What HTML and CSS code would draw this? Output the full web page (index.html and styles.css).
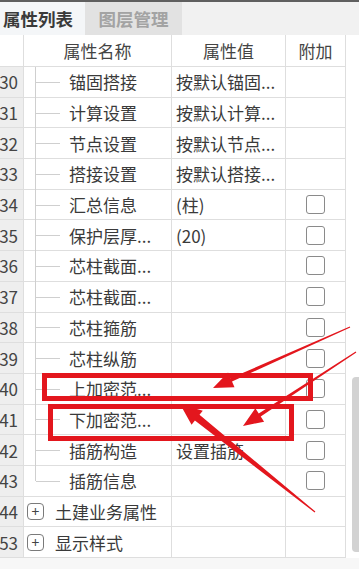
FILE: index.html
```html
<!DOCTYPE html>
<html lang="zh">
<head>
<meta charset="utf-8">
<title>属性列表</title>
<link rel="stylesheet" href="styles.css">
</head>
<body>
<div class="panel">
  <div class="tabs">
    <div class="tab tab-active">属性列表</div>
    <div class="tab tab-idle">图层管理</div>
    <div class="tab-fill"></div>
  </div>
  <div class="head">
    <div class="hc"></div>
    <div class="hc">属性名称</div>
    <div class="hc">属性值</div>
    <div class="hc">附加</div>
    <div class="hc hc-last"></div>
  </div>
  <div class="body">
    <div class="rows">
      <div class="row"><div class="c num">30</div><div class="c name tree">锚固搭接</div><div class="c val">按默认锚固...</div><div class="c add"></div></div>
      <div class="row"><div class="c num">31</div><div class="c name tree">计算设置</div><div class="c val">按默认计算...</div><div class="c add"></div></div>
      <div class="row"><div class="c num">32</div><div class="c name tree">节点设置</div><div class="c val">按默认节点...</div><div class="c add"></div></div>
      <div class="row"><div class="c num">33</div><div class="c name tree">搭接设置</div><div class="c val">按默认搭接...</div><div class="c add"></div></div>
      <div class="row"><div class="c num">34</div><div class="c name tree">汇总信息</div><div class="c val">(柱)</div><div class="c add"><span class="cb"></span></div></div>
      <div class="row"><div class="c num">35</div><div class="c name tree">保护层厚...</div><div class="c val">(20)</div><div class="c add"><span class="cb"></span></div></div>
      <div class="row"><div class="c num">36</div><div class="c name tree">芯柱截面...</div><div class="c val"></div><div class="c add"><span class="cb"></span></div></div>
      <div class="row"><div class="c num">37</div><div class="c name tree">芯柱截面...</div><div class="c val"></div><div class="c add"><span class="cb"></span></div></div>
      <div class="row"><div class="c num">38</div><div class="c name tree">芯柱箍筋</div><div class="c val"></div><div class="c add"><span class="cb"></span></div></div>
      <div class="row"><div class="c num">39</div><div class="c name tree">芯柱纵筋</div><div class="c val"></div><div class="c add"><span class="cb"></span></div></div>
      <div class="row"><div class="c num">40</div><div class="c name tree">上加密范...</div><div class="c val"></div><div class="c add"><span class="cb"></span></div></div>
      <div class="row"><div class="c num">41</div><div class="c name tree">下加密范...</div><div class="c val"></div><div class="c add"><span class="cb"></span></div></div>
      <div class="row"><div class="c num">42</div><div class="c name tree">插筋构造</div><div class="c val">设置插筋</div><div class="c add"><span class="cb"></span></div></div>
      <div class="row"><div class="c num">43</div><div class="c name tree tree-last">插筋信息</div><div class="c val"></div><div class="c add"><span class="cb"></span></div></div>
      <div class="row"><div class="c num">44</div><div class="c name group"><span class="plus">+</span>土建业务属性</div><div class="c val"></div><div class="c add"></div></div>
      <div class="row"><div class="c num">53</div><div class="c name group"><span class="plus">+</span>显示样式</div><div class="c val"></div><div class="c add"></div></div>
    </div>
    <div class="track"><div class="thumb"></div></div>
  </div>
  <div class="foot"></div>
  <svg class="marks" width="359" height="569" viewBox="0 0 359 569">
    <rect x="44.5" y="375.5" width="266" height="23" fill="none" stroke="#e3161d" stroke-width="5"/>
    <rect x="50.5" y="406.5" width="241" height="32" fill="none" stroke="#e3161d" stroke-width="5"/>
    <polygon fill="#e3161d" points="350.24,327.55 232.0,381.5 234.52,387.18 213,388 228.02,372.56 230.5,378.2 349.76,326.45"/>
    <polygon fill="#e3161d" points="356.33,352.5 260.72,416.55 264.11,421.73 243,426 255.35,408.35 258.74,413.53 355.67,351.5"/>
    <polygon fill="#e3161d" points="315.37,511.53 199.5,414.8 202.8,410.71 180,404 191.56,424.77 194.9,420.6 314.63,512.47"/>
  </svg>
</div>
</body>
</html>
```

FILE: styles.css
```css
* { box-sizing: border-box; }
html, body { margin: 0; padding: 0; }
body {
  width: 359px;
  height: 569px;
  overflow: hidden;
  background: #f7f7f7;
  font-family: "Noto Sans CJK SC", "Noto Sans", sans-serif;
  color: #333;
}
.panel {
  position: relative;
  width: 359px;
  height: 569px;
  display: flex;
  flex-direction: column;
}
.tabs {
  display: flex;
  height: 35px;
  border-top: 2px solid #5f5f5f;
  background: #f0f0f0;
  flex: none;
}
.tab {
  display: flex;
  align-items: center;
  font-size: 17.5px;
  font-weight: 700;
}
.tab-active {
  width: 85px;
  padding-left: 3px;
  background: #f4f6f8;
  color: #3a3a3a;
}
.tab-idle {
  width: 97px;
  justify-content: center;
  background: #e2e2e2;
  color: #a3a3a3;
}
.tab-fill { flex: 1; background: #f1f1f1; }
.head {
  display: grid;
  grid-template-columns: 24px 148px 114px 60px 13px;
  height: 32px;
  background: #fff;
  flex: none;
}
.hc {
  display: flex;
  align-items: center;
  justify-content: center;
  border-right: 1px solid #dedede;
  border-bottom: 1px solid #dedede;
  font-size: 17px;
  color: #444;
}
.hc-last { border-right: none; border-bottom: none; }
.body {
  display: flex;
  background: #fff;
  flex: none;
}
.rows { width: 346px; }
.row {
  display: grid;
  grid-template-columns: 24px 148px 114px 60px;
  height: 30.7px;
  border-bottom: 1px solid #dedede;
}
.c {
  display: flex;
  align-items: center;
  border-right: 1px solid #dedede;
  font-size: 17px;
  white-space: nowrap;
  overflow: hidden;
  color: #3a3a3a;
}
.num {
  justify-content: flex-end;
  padding-right: 5px;
  background: #eeeeee;
  color: #444;
}
.name { position: relative; overflow: visible; }
.tree { padding-left: 45px; }
.tree::before {
  content: "";
  position: absolute;
  left: 11px;
  top: 0;
  bottom: -1px;
  width: 1px;
  background: #cfcfcf;
}
.tree-last::before { bottom: 50%; }
.tree::after {
  content: "";
  position: absolute;
  left: 12px;
  width: 24px;
  top: 50%;
  height: 1px;
  background: #cfcfcf;
}
.group { padding-left: 3px; }
.plus {
  flex: none;
  width: 17px;
  height: 17px;
  margin-right: 11px;
  border: 1px solid #7a7a7a;
  border-radius: 4px;
  display: flex;
  align-items: center;
  justify-content: center;
  font-size: 14px;
  line-height: 1;
  color: #444;
}
.val { padding-left: 4px; }
.add { justify-content: center; }
.cb {
  flex: none;
  width: 19px;
  height: 19px;
  border: 1.5px solid #8a8a8a;
  border-radius: 3px;
  background: #fff;
}
.track {
  width: 13px;
  padding-top: 310px;
  padding-left: 6px;
}
.thumb {
  width: 7px;
  height: 175px;
  border-radius: 4px 0 0 4px;
  background: #d2d2d2;
}
.foot { flex: 1; background: #f7f7f7; }
.marks {
  position: absolute;
  left: 0;
  top: 0;
  pointer-events: none;
}
```
